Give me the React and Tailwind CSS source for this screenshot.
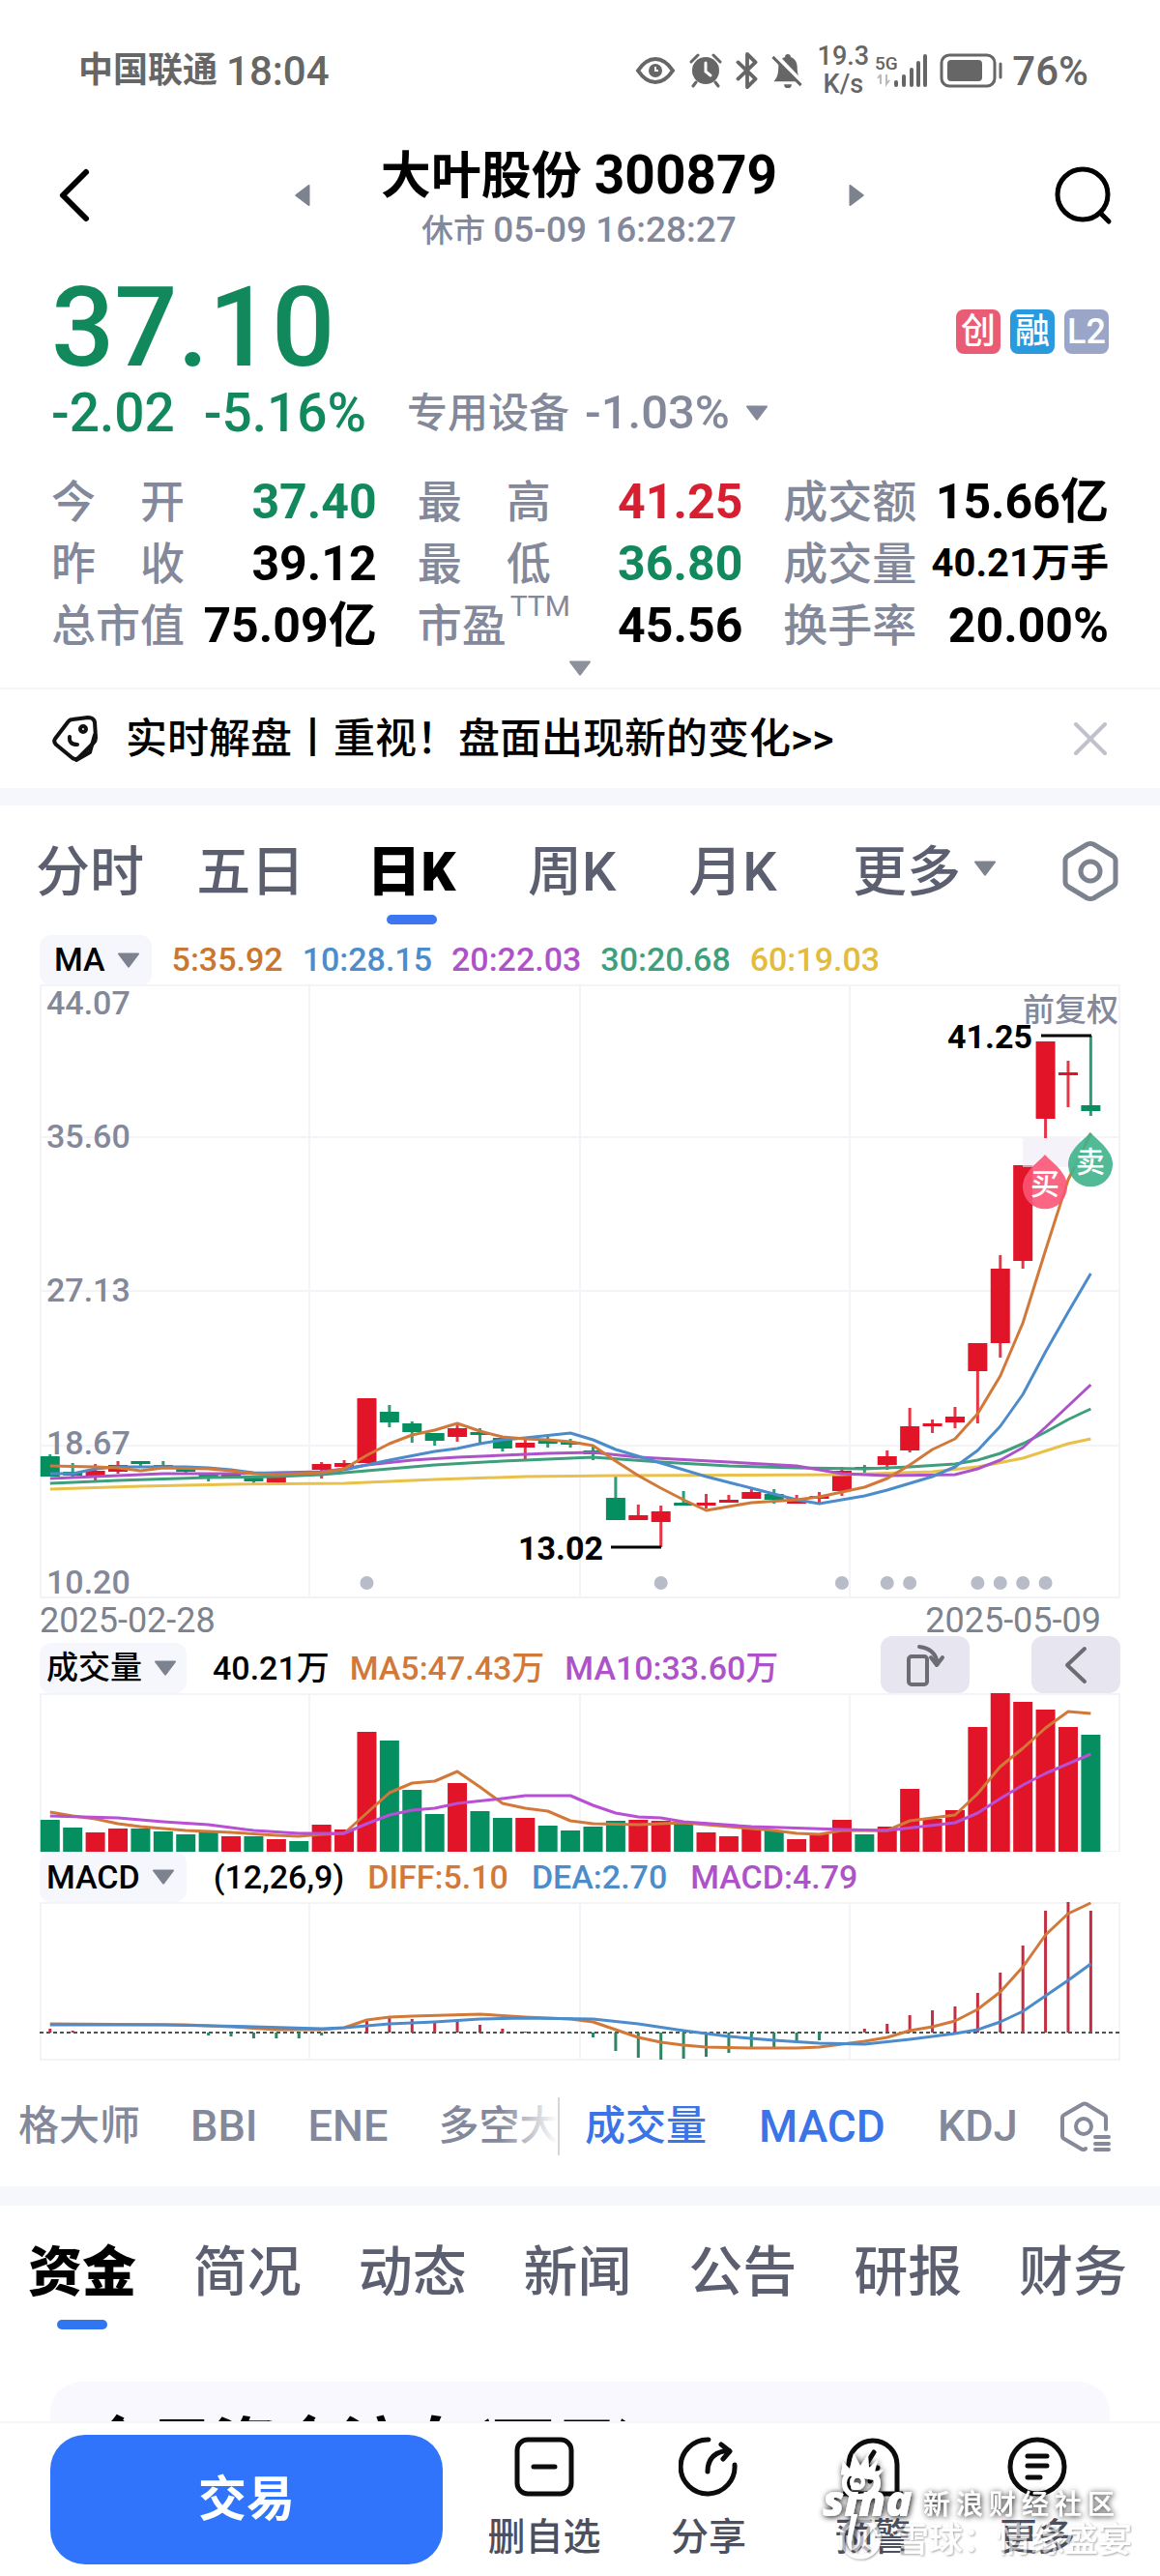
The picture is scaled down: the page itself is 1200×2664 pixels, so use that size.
import { useState } from 'react'

const RED = '#e11428'
const GREEN = '#058e5f'
const ORANGE = '#d2793a'
const BLUE = '#4c8ccb'
const PURPLE = '#ad52c9'
const TEAL = '#3f9f7c'
const YELLOW = '#e8c04a'

// [direction, body top, body bottom, high, low]
const CANDLES = [
  ['d', 1506, 1527, 1504, 1527], ['d', 1522, 1526, 1513, 1528], ['u', 1521, 1528, 1514, 1531],
  ['u', 1515, 1522, 1511, 1524], ['d', 1511, 1514, 1511, 1516], ['d', 1515, 1517, 1511, 1517],
  ['d', 1519, 1522, 1519, 1524], ['d', 1525, 1527, 1525, 1532], ['u', 1525, 1527, 1525, 1527],
  ['d', 1527, 1532, 1527, 1534], ['u', 1528, 1533, 1527, 1533], ['d', 1523, 1526, 1523, 1526],
  ['u', 1514, 1520, 1512, 1529], ['u', 1513, 1517, 1510, 1519], ['u', 1446, 1513, 1446, 1513],
  ['d', 1460, 1471, 1453, 1476], ['d', 1472, 1481, 1470, 1492], ['d', 1482, 1490, 1482, 1495],
  ['u', 1477, 1486, 1471, 1491], ['d', 1481, 1484, 1477, 1492], ['d', 1487, 1498, 1485, 1501],
  ['u', 1492, 1497, 1489, 1510], ['d', 1489, 1493, 1486, 1497], ['d', 1491, 1493, 1488, 1497],
  ['d', 1500, 1504, 1495, 1510], ['d', 1549, 1572, 1527, 1572], ['u', 1567, 1572, 1556, 1572],
  ['u', 1563, 1574, 1557, 1600], ['d', 1554, 1557, 1542, 1557], ['u', 1554, 1556, 1545, 1560],
  ['u', 1551, 1553, 1546, 1554], ['u', 1543, 1550, 1540, 1550], ['d', 1545, 1551, 1540, 1555],
  ['u', 1552, 1555, 1546, 1555], ['u', 1547, 1549, 1543, 1556], ['u', 1521, 1542, 1517, 1547],
  ['d', 1517, 1519, 1515, 1523], ['u', 1506, 1515, 1500, 1520], ['u', 1475, 1500, 1456, 1502],
  ['u', 1472, 1475, 1468, 1482], ['u', 1465, 1471, 1455, 1477], ['u', 1389, 1418, 1389, 1472],
  ['u', 1312, 1389, 1298, 1404], ['u', 1205, 1304, 1205, 1312], ['u', 1077, 1157, 1077, 1177],
  ['u', 1109, 1112, 1097, 1145], ['d', 1143, 1149, 1071, 1154],
]

const VOLUMES = [
  33, 25, 20, 24, 24, 21, 18, 21, 16, 16, 13, 11, 28, 23, 124, 115, 64, 39, 71, 42, 35, 35, 27, 22,
  26, 32, 33, 32, 29, 20, 16, 24, 22, 13, 18, 33, 18, 26, 65, 34, 43, 129, 164, 155, 147, 129, 121,
]

const MACD = [
  4, 2, 0, 0, 0, 0, 0, -3, -4, -6, -6, -6, -3, 0, 12, 15, 14, 11, 11, 8, 4, 1, 0, -1, -5, -19, -26,
  -28, -27, -25, -21, -16, -15, -11, -8, 0, 4, 9, 18, 23, 27, 41, 62, 90, 126, 135, 126,
]

const PRICE_LINES = [
  { color: YELLOW, points: [[0, 1540], [4, 1537], [8, 1535], [13, 1534], [17, 1530], [21, 1527], [25, 1526], [35, 1525], [39, 1522], [41, 1517], [43, 1508], [45, 1493], [46, 1488]] },
  { color: TEAL, points: [[0, 1534], [3, 1531], [7, 1528], [10, 1527], [12, 1525], [14, 1521], [17, 1515], [20, 1511], [23, 1508], [24, 1507], [27, 1512], [30, 1516], [33, 1518], [36, 1519], [38, 1517], [40, 1514], [41, 1510], [42, 1503], [43, 1493], [44, 1481], [45, 1468], [46, 1457]] },
  { color: PURPLE, points: [[0, 1529], [2, 1527], [5, 1524], [8, 1524], [10, 1523], [12, 1522], [13, 1519], [14, 1515], [16, 1510], [18, 1507], [20, 1505], [22, 1503], [24, 1502], [26, 1507], [30, 1512], [33, 1516], [35, 1524], [37, 1526], [40, 1525], [41, 1519], [42, 1510], [43, 1497], [44, 1476], [45, 1454], [46, 1432]] },
  { color: BLUE, points: [[0, 1524], [1, 1524], [2, 1519], [3, 1517], [6, 1517], [7, 1518], [8, 1520], [9, 1523], [10, 1524], [11, 1524], [12, 1523], [13, 1520], [14, 1515], [15, 1510], [17, 1501], [18, 1498], [19, 1493], [20, 1489], [21, 1487], [23, 1482], [24, 1489], [25, 1499], [27, 1513], [29, 1527], [31, 1539], [33, 1551], [34, 1555], [36, 1547], [37, 1541], [39, 1527], [40, 1517], [41, 1500], [42, 1475], [43, 1442], [44, 1398], [45, 1357], [46, 1317]] },
  { color: ORANGE, points: [[0, 1516], [2, 1517], [3, 1518], [4, 1521], [5, 1518], [7, 1519], [8, 1521], [9, 1524], [10, 1525], [11, 1524], [12, 1523], [13, 1519], [14, 1505], [15, 1493], [16, 1484], [17, 1479], [18, 1472], [19, 1480], [20, 1486], [21, 1488], [22, 1489], [23, 1491], [24, 1495], [25, 1511], [26, 1526], [27, 1539], [28, 1551], [29, 1562], [30, 1558], [31, 1554], [33, 1551], [34, 1548], [35, 1543], [36, 1538], [37, 1529], [38, 1515], [39, 1499], [40, 1488], [41, 1462], [42, 1423], [43, 1368], [44, 1293], [45, 1220], [46, 1172]] },
]

const VOLUME_LINES = [
  { color: ORANGE, points: [[0, 1874], [1, 1878], [2, 1881], [3, 1886], [4, 1889], [6, 1893], [8, 1895], [10, 1898], [11, 1899], [12, 1897], [13, 1896], [14, 1875], [15, 1854], [16, 1844], [17, 1842], [18, 1832], [19, 1848], [20, 1865], [21, 1870], [22, 1873], [23, 1883], [24, 1886], [26, 1887], [28, 1885], [30, 1889], [32, 1893], [33, 1896], [34, 1897], [35, 1893], [37, 1893], [38, 1883], [39, 1880], [40, 1877], [41, 1855], [42, 1827], [43, 1808], [44, 1787], [45, 1770], [46, 1772]] },
  { color: '#b84fd4', points: [[0, 1878], [3, 1880], [5, 1884], [7, 1887], [9, 1893], [11, 1896], [13, 1896], [14, 1886], [15, 1877], [16, 1872], [17, 1870], [18, 1865], [20, 1860], [21, 1857], [23, 1857], [24, 1867], [25, 1875], [26, 1879], [27, 1880], [28, 1884], [31, 1889], [35, 1892], [37, 1893], [40, 1885], [41, 1875], [42, 1860], [43, 1846], [44, 1834], [45, 1824], [46, 1814]] },
]

const MACD_LINES = [
  { color: ORANGE, points: [[0, 2093], [6, 2094], [8, 2096], [10, 2099], [12, 2099], [13, 2097], [14, 2089], [15, 2086], [16, 2085], [19, 2083], [21, 2086], [23, 2088], [24, 2091], [25, 2099], [26, 2107], [27, 2112], [28, 2115], [29, 2117], [31, 2118], [33, 2118], [34, 2117], [35, 2114], [36, 2111], [37, 2107], [38, 2100], [39, 2096], [40, 2090], [41, 2078], [42, 2060], [43, 2034], [44, 2001], [45, 1979], [46, 1968]] },
  { color: BLUE, points: [[0, 2094], [5, 2094], [9, 2096], [12, 2098], [13, 2097], [15, 2093], [17, 2091], [19, 2088], [21, 2087], [24, 2088], [26, 2093], [28, 2100], [30, 2106], [32, 2110], [34, 2113], [36, 2114], [38, 2109], [40, 2103], [41, 2099], [42, 2091], [43, 2080], [44, 2064], [45, 2048], [46, 2031]] },
]

const STATS = [
  ['今开', '37.40', 'text-[50px] text-[#12895d]'],
  ['最高', '41.25', 'text-[50px] text-[#d61f30]'],
  ['成交额', '15.66亿', 'text-[50px] text-black'],
  ['昨收', '39.12', 'text-[50px] text-black'],
  ['最低', '36.80', 'text-[50px] text-[#12895d]'],
  ['成交量', '40.21万手', 'text-[40px] text-black'],
  ['总市值', '75.09亿', 'text-[50px] text-black'],
  ['市盈', '45.56', 'text-[50px] text-black'],
  ['换手率', '20.00%', 'text-[50px] text-black'],
]

const PERIODS = ['分时', '五日', '日K', '周K', '月K']
const SECTIONS = ['资金', '简况', '动态', '新闻', '公告', '研报', '财务']

const x = (i) => 10.8 + i * 23.404
const toPoints = (points) => points.map(([i, y]) => `${x(i)},${y}`).join(' ')
const isUp = (i) => CANDLES[i][0] === 'u'

function Triangle({ className = '' }) {
  return (
    <svg viewBox="0 0 24 16" className={`h-4 w-6 shrink-0 ${className}`} aria-hidden="true">
      <path d="M2 0.500h20a1 1 0 0 1 0.800 1.600L13 15a1.200 1.200 0 0 1-2 0L1.200 2.100A1 1 0 0 1 2 0.500z" fill="currentColor" />
    </svg>
  )
}

function Grid({ top, bottom, rows = [] }) {
  return (
    <g stroke="#f4f4f8" strokeWidth="2">
      {[1, 279, 559, 838, 1117].map((gx) => <line key={gx} x1={gx} x2={gx} y1={top} y2={bottom} />)}
      {[top + 1, ...rows, bottom - 1].map((gy) => <line key={gy} x1="0" x2="1118" y1={gy} y2={gy} />)}
    </g>
  )
}

function Lines({ lines }) {
  return lines.map(({ color, points }) => (
    <polyline key={color} points={toPoints(points)} fill="none" stroke={color} strokeWidth="3" strokeLinejoin="round" />
  ))
}

function Pin({ cx, cy, fill, label }) {
  return (
    <g transform={`translate(${cx} ${cy})`}>
      <path d="M0-32C5-26 14-20 18-13a23 23 0 1 1-36 0C-14-20-5-26 0-32z" fill={fill} fillOpacity="0.9" />
      <text y="9" textAnchor="middle" fontSize="30" fontWeight="500" fill="#fff">{label}</text>
    </g>
  )
}

function StatusBar() {
  return (
    <header className="flex h-[146px] items-center justify-between pl-[81px] pr-[74px] text-[42px] font-medium text-[#666]">
      <div className="flex items-center gap-[9px]">
        <span className="text-[36px] font-bold">中国联通</span>
        <span>18:04</span>
      </div>
      <div className="flex items-center">
        <svg viewBox="0 0 42 30" className="h-[30px] w-[42px]" fill="none" stroke="currentColor" strokeWidth="4">
          <path d="M3 15C9 6 15 3 21 3s12 3 18 12c-6 9-12 12-18 12S9 24 3 15z" />
          <circle cx="21" cy="15" r="7" fill="currentColor" stroke="none" />
          <path d="M21 11v4h3" stroke="#fff" strokeWidth="2" />
        </svg>
        <svg viewBox="0 0 34 36" className="ml-[14px] h-[36px] w-[34px]" fill="none" stroke="currentColor" strokeWidth="3" strokeLinecap="round">
          <circle cx="17" cy="18" r="14" fill="currentColor" stroke="none" />
          <path d="M2 9l7-7M32 9l-7-7M7 30l-3 4M27 30l3 4" />
          <path d="M17 10v9l5 4" stroke="#fff" />
        </svg>
        <svg viewBox="0 0 26 40" className="ml-[13px] h-[38px] w-[26px]" fill="none" stroke="currentColor" strokeWidth="4" strokeLinejoin="round" strokeLinecap="round">
          <path d="M3 11l19 18-9 9V2l9 9L3 29" />
        </svg>
        <svg viewBox="0 0 34 38" className="ml-[12px] h-[37px] w-[34px]" fill="currentColor">
          <path d="M17 1a3 3 0 0 1 3 3c5 2 7 6 7 11 0 8 2 12 5 15H2c3-3 5-7 5-15 0-5 2-9 7-11a3 3 0 0 1 3-3zM13 33h8a4 4 0 0 1-8 0z" />
          <path d="M3 2l29 30" stroke="#fff" strokeWidth="6" />
          <path d="M1 4l30 30" stroke="currentColor" strokeWidth="3" />
        </svg>
        <div className="ml-[12px] flex w-[56px] flex-col items-center text-[27px] leading-[29px]">
          <span>19.3</span>
          <span>K/s</span>
        </div>
        <svg viewBox="0 0 56 34" className="ml-[5px] h-[34px] w-[56px]" fill="currentColor">
          <text x="0" y="16" fontSize="19" fontWeight="500">5G</text>
          <path d="M6 21v10M3 25l3-4M12 21v10l3-4" fill="none" stroke="#bbb" strokeWidth="2" />
          <rect x="20" y="27" width="4" height="7" rx="2" />
          <rect x="28" y="21" width="4" height="13" rx="2" />
          <rect x="36" y="14" width="4" height="20" rx="2" />
          <rect x="43" y="7" width="4" height="27" rx="2" />
          <rect x="50" y="0" width="4" height="34" rx="2" />
        </svg>
        <svg viewBox="0 0 66 36" className="ml-[11px] h-[36px] w-[66px]" fill="none" stroke="currentColor">
          <rect x="2" y="2" width="55" height="32" rx="8" strokeWidth="3" />
          <rect x="8" y="7" width="36" height="22" rx="4" fill="currentColor" stroke="none" />
          <path d="M63 11v14" strokeWidth="3" strokeLinecap="round" />
        </svg>
        <span className="ml-[9px]">76%</span>
      </div>
    </header>
  )
}

function TitleBar() {
  return (
    <div className="flex h-[112px] items-center justify-between pl-[58px] pr-[48px]">
      <button type="button" aria-label="返回" className="w-[50px]">
        <svg viewBox="0 0 40 60" className="h-[60px] w-[40px]" fill="none" stroke="#000" strokeWidth="6" strokeLinecap="round" strokeLinejoin="round">
          <path d="M31 6L7 30l24 24" />
        </svg>
      </button>
      <div className="flex items-center gap-[67px]">
        <button type="button" aria-label="上一只" className="text-[#7c828e]"><Triangle className="rotate-90" /></button>
        <div className="flex w-[415px] flex-col items-center pt-[4px]">
          <h1 className="whitespace-nowrap text-[52px] font-bold leading-[64px] text-black">
            大叶股份 <span className="text-[55px]">300879</span>
          </h1>
          <p className="mt-[3px] whitespace-nowrap text-[33px] font-medium leading-[40px] text-[#83889a]">
            休市 <span className="text-[37px]">05-09 16:28:27</span>
          </p>
        </div>
        <button type="button" aria-label="下一只" className="text-[#7c828e]"><Triangle className="-rotate-90" /></button>
      </div>
      <button type="button" aria-label="搜索">
        <svg viewBox="0 0 62 62" className="h-[62px] w-[62px]" fill="none" stroke="#000" strokeWidth="5" strokeLinecap="round">
          <circle cx="30" cy="30" r="26" />
          <path d="M48 49l9 9" />
        </svg>
      </button>
    </div>
  )
}

function Quote() {
  return (
    <section className="px-[53px] pt-[21px]">
      <div className="flex items-center justify-between">
        <strong className="text-[115px] font-medium leading-[120px] text-[#12895d]">37.10</strong>
        <div className="mt-[8px] flex gap-[10px] text-[36px] font-medium leading-[46px] text-white">
          <span className="h-[46px] w-[46px] rounded-lg bg-[#ea5c73] text-center">创</span>
          <span className="h-[46px] w-[46px] rounded-lg bg-[#2a9ade] text-center">融</span>
          <span className="h-[46px] w-[46px] rounded-lg bg-[#9aa5c8] text-center">L2</span>
        </div>
      </div>
      <div className="flex h-[56px] items-center">
        <span className="text-[55px] font-medium text-[#12895d]">-2.02</span>
        <span className="ml-[30px] text-[55px] font-medium text-[#12895d]">-5.16%</span>
        <button type="button" className="ml-[42px] flex items-center gap-[16px] font-medium text-[#83889a]">
          <span className="text-[42px]">专用设备</span>
          <span className="text-[49px]">-1.03%</span>
          <Triangle />
        </button>
      </div>
      <dl className="mt-[32px] grid grid-cols-3 gap-x-[42px]">
        {STATS.map(([label, value, tone]) => (
          <div key={label} className="flex h-[64px] items-center justify-between">
            <dt className="flex w-[138px] shrink-0 justify-between text-[46px] font-medium leading-[64px] text-[#83889a]">
              {label === '市盈' ? (
                <span className="flex whitespace-nowrap">市盈<sup className="top-0 -mt-[14px] ml-1 text-[30px] font-normal leading-[52px]">TTM</sup></span>
              ) : label.split('').map((char) => <span key={char}>{char}</span>)}
            </dt>
            <dd className={`whitespace-nowrap font-bold ${tone}`}>{value}</dd>
          </div>
        ))}
      </dl>
      <div className="flex h-[32px] items-start justify-center pt-[4px] text-[#8b909b]"><Triangle /></div>
    </section>
  )
}

function Notice() {
  return (
    <div className="flex h-[104px] items-center border-t-2 border-[#f4f4f6] pl-[54px] pr-[54px]">
      <svg viewBox="0 0 48 50" className="h-[50px] w-[48px] shrink-0" fill="none" stroke="#111" strokeWidth="4" strokeLinejoin="round" strokeLinecap="round">
        <path d="M21 5l16-2q6 0 7 5l1 16q0 3-2 5L27 45q-3 2-6 0L4 31q-3-3-1-6L16 8q2-3 5-3z" />
        <path d="M44 21l-5 18-14 8" />
        <circle cx="32" cy="15" r="3" />
        <path d="M18 23q-1 8 8 8" />
      </svg>
      <a href="#notice" className="ml-[28px] whitespace-nowrap text-[43px] font-medium leading-[60px] text-black">实时解盘丨重视！盘面出现新的变化&gt;&gt;</a>
      <button type="button" aria-label="关闭" className="ml-auto">
        <svg viewBox="0 0 36 36" className="h-[36px] w-[36px]" stroke="#bfc2cb" strokeWidth="4" strokeLinecap="round">
          <path d="M3 3l30 30M33 3L3 33" />
        </svg>
      </button>
    </div>
  )
}

function PeriodTabs() {
  const [period, setPeriod] = useState('日K')

  return (
    <nav className="flex h-[134px] items-start pl-[10px] pt-[37px] text-[56px] leading-[64px] text-[#5c5f70]">
      {PERIODS.map((item) => (
        <button
          key={item}
          type="button"
          onClick={() => setPeriod(item)}
          className={`flex flex-1 flex-col items-center whitespace-nowrap ${item === period ? 'font-black text-black' : 'font-medium'}`}
        >
          {item}
          {item === period && <span className="mt-[12px] h-[10px] w-[52px] rounded-full bg-[#3c76f0]" />}
        </button>
      ))}
      <button type="button" className="ml-[41px] flex w-[174px] shrink-0 items-center gap-[13px] font-medium">
        更多
        <Triangle className="-mt-[8px] text-[#7c828e]" />
      </button>
      <button type="button" aria-label="设置" className="mx-[42px] shrink-0">
        <svg viewBox="0 0 60 62" className="h-[62px] w-[60px]" fill="none" stroke="#7c828e" strokeWidth="5" strokeLinejoin="round">
          <path d="M27 3q3-1 6 0l20 12q3 2 3 5v22q0 3-3 5L33 59q-3 1-6 0L7 47q-3-2-3-5V20q0-3 3-5z" />
          <circle cx="30" cy="31" r="10" />
        </svg>
      </button>
    </nav>
  )
}

function Chip({ children, className = '' }) {
  return (
    <button type="button" className={`flex h-[52px] items-center gap-[12px] whitespace-nowrap rounded-xl bg-[#f6f6fd] text-black ${className}`}>
      {children}
      <Triangle className="text-[#7c828e]" />
    </button>
  )
}

function PriceChart() {
  return (
    <svg viewBox="0 1018 1118 636" className="block h-auto w-full" role="img" aria-label="日K线图">
      <Grid top={1018} bottom={1653} rows={[1176, 1335, 1495]} />
      <g fontSize="34" fill="#83889a">
        <text x="7" y="1049">44.07</text>
        <text x="7" y="1187">35.60</text>
        <text x="7" y="1346">27.13</text>
        <text x="7" y="1504">18.67</text>
        <text x="7" y="1648">10.20</text>
        <text x="1116" y="1056" fontSize="33" textAnchor="end">前复权</text>
      </g>
      {CANDLES.map(([, top, bottom, high, low], i) => (
        <g key={i} fill={isUp(i) ? RED : GREEN}>
          <rect x={x(i) - 1.5} y={high} width="3" height={low - high} fillOpacity="0.85" />
          <rect x={x(i) - 10} y={top} width="20" height={Math.max(bottom - top, 3)} />
        </g>
      ))}
      <Lines lines={PRICE_LINES} />
      <g fill="#b8bbc8">
        {[14, 27, 35, 37, 38, 41, 42, 43, 44].map((i) => <circle key={i} cx={x(i)} cy="1637" r="7" />)}
      </g>
      <path d="M591 1600h52M1036 1071h52" stroke="#000" strokeWidth="3" />
      <g fontSize="34" fontWeight="700" textAnchor="end">
        <text x="583" y="1613">13.02</text>
        <text x="1027" y="1084">41.25</text>
      </g>
      <rect x="1017" y="1177" width="60" height="30" fill="#eeeaf6" fillOpacity="0.6" />
      <Pin cx={1040} cy={1226} fill="#fb5575" label="买" />
      <Pin cx={1087} cy={1203} fill="#3fb28b" label="卖" />
    </svg>
  )
}

function VolumeChart() {
  return (
    <svg viewBox="0 1751 1118 164" className="block h-auto w-full" role="img" aria-label="成交量图">
      <Grid top={1751} bottom={1916} />
      {VOLUMES.map((v, i) => (
        <rect key={i} x={x(i) - 10} y={1915 - v} width="20" height={v} fill={isUp(i) ? RED : GREEN} />
      ))}
      <Lines lines={VOLUME_LINES} />
    </svg>
  )
}

function MacdChart() {
  return (
    <svg viewBox="0 1967 1118 164" className="block h-auto w-full" role="img" aria-label="MACD图">
      <Grid top={1967} bottom={2131} />
      <path d="M0 2102h1118" stroke="#4c5350" strokeWidth="2" strokeDasharray="4 3" />
      {MACD.map((v, i) => (
        <rect key={i} x={x(i) - 1.5} y={v > 0 ? 2102 - v : 2102} width="3" height={Math.abs(v)} fill={v > 0 ? '#c22f42' : '#2c8563'} />
      ))}
      <Lines lines={MACD_LINES} />
    </svg>
  )
}

function Charts() {
  return (
    <section className="px-[41px] text-[34px] font-medium">
      <div className="flex h-[51px] items-center">
        <Chip className="mr-[21px] pl-[15px] pr-[12px]">MA</Chip>
        <div className="flex gap-[20px]">
          <span className="text-[#c9772f]">5:35.92</span>
          <span className="text-[#4c8ccb]">10:28.15</span>
          <span className="text-[#ad52c9]">20:22.03</span>
          <span className="text-[#3f9f7c]">30:20.68</span>
          <span className="text-[#e3bb3d]">60:19.03</span>
        </div>
      </div>
      <PriceChart />
      <div className="flex h-[38px] items-center justify-between pr-[20px] pt-[6px] text-[36px] font-normal text-[#7c828e]">
        <time>2025-02-28</time>
        <time>2025-05-09</time>
      </div>
      <div className="flex h-[59px] items-end">
        <Chip className="pl-[7px] pr-[10px] text-[33px]">成交量</Chip>
        <div className="ml-[27px] flex h-[52px] items-center gap-[21px] whitespace-nowrap">
          <span className="text-black">40.21万</span>
          <span className="text-[#d2793a]">MA5:47.43万</span>
          <span className="text-[#ad52c9]">MA10:33.60万</span>
        </div>
        <div className="ml-auto flex gap-[64px]">
          <button type="button" aria-label="横屏" className="flex h-[59px] w-[92px] items-center justify-center rounded-xl bg-[#e7e5f0]">
            <svg viewBox="0 0 42 46" className="h-[46px] w-[42px]" fill="none" stroke="#6b6c74" strokeWidth="4" strokeLinecap="round" strokeLinejoin="round">
              <rect x="4" y="14" width="19" height="29" rx="3" />
              <path d="M15 4q17 2 19 18M27 15l6 8 6-8" />
            </svg>
          </button>
          <button type="button" aria-label="收起" className="flex h-[59px] w-[92px] items-center justify-center rounded-xl bg-[#e7e5f0]">
            <svg viewBox="0 0 24 40" className="h-[40px] w-[24px]" fill="none" stroke="#6b6c74" strokeWidth="4" strokeLinecap="round" strokeLinejoin="round">
              <path d="M21 3L3 20l18 17" />
            </svg>
          </button>
        </div>
      </div>
      <VolumeChart />
      <div className="flex h-[52px] items-center">
        <Chip className="pl-[7px] pr-[12px]">MACD</Chip>
        <div className="ml-[28px] flex gap-[24px] whitespace-nowrap">
          <span className="text-black">(12,26,9)</span>
          <span className="text-[#d2793a]">DIFF:5.10</span>
          <span className="text-[#4c8ccb]">DEA:2.70</span>
          <span className="text-[#ad52c9]">MACD:4.79</span>
        </div>
      </div>
      <MacdChart />
    </section>
  )
}

function IndicatorBar() {
  return (
    <div className="flex h-[130px] items-center pr-[50px] pt-[6px] text-[42px] font-medium leading-[60px] text-[#83889a]">
      <div className="relative flex w-[579px] gap-[52px] overflow-hidden whitespace-nowrap border-r-2 border-[#d4d6dc] pl-[19px]">
        <button type="button">格大师</button>
        <button type="button" className="text-[45px]">BBI</button>
        <button type="button" className="text-[45px]">ENE</button>
        <button type="button">多空大师</button>
        <span className="absolute inset-y-0 right-0 w-[60px] bg-linear-to-r from-white/0 to-white" />
      </div>
      <div className="flex flex-1 gap-[54px] whitespace-nowrap pl-[26px]">
        <button type="button" className="text-[#3a74e6]">成交量</button>
        <button type="button" className="text-[46px] text-[#3a74e6]">MACD</button>
        <button type="button" className="text-[45px]">KDJ</button>
      </div>
      <button type="button" aria-label="指标设置" className="shrink-0">
        <svg viewBox="0 0 54 54" className="h-[54px] w-[54px]" fill="none" stroke="#85899a" strokeWidth="4" strokeLinecap="round" strokeLinejoin="round">
          <path d="M48 30V18q0-2-2-3L28 4q-2-1-4 0L5 15q-2 1-2 3v19q0 2 2 3l17 10q3 2 5 0" />
          <circle cx="25" cy="27" r="8" />
          <path d="M37 38h14M37 45h14M37 51h14" />
        </svg>
      </button>
    </div>
  )
}

function SectionTabs() {
  const [section, setSection] = useState('资金')

  return (
    <nav className="flex h-[182px] items-start justify-between pl-[29px] pr-[34px] pt-[37px] text-[56px] leading-[64px]">
      {SECTIONS.map((item) => (
        <button
          key={item}
          type="button"
          onClick={() => setSection(item)}
          className={`flex flex-col items-center whitespace-nowrap ${item === section ? 'font-black text-black' : 'font-medium text-[#5c5f70]'}`}
        >
          {item}
          {item === section && <span className="mt-[17px] h-[10px] w-[52px] rounded-full bg-[#3076f0]" />}
        </button>
      ))}
    </nav>
  )
}

function Watermark() {
  return (
    <svg viewBox="0 0 330 130" className="pointer-events-none absolute bottom-[6px] right-[24px] h-[130px] w-[330px]" aria-hidden="true">
      <defs>
        <filter id="shade" x="-20%" y="-20%" width="140%" height="140%">
          <feDropShadow dx="1" dy="1" stdDeviation="3" floodColor="#000" floodOpacity="1" />
        </filter>
        <filter id="soft" x="-20%" y="-20%" width="140%" height="140%">
          <feDropShadow dx="1" dy="1" stdDeviation="1" floodColor="#555" floodOpacity="0.9" />
        </filter>
      </defs>
      <g fill="#fff" filter="url(#soft)" opacity="0.6">
        <text x="80" y="111" fontSize="35" fontWeight="500">雪球：情缘盛宴</text>
        <g fill="none" stroke="#fff" strokeWidth="5">
          <circle cx="44" cy="97" r="19" />
          <path d="M34 84l18 26M56 84l-18 26" />
        </g>
      </g>
      <g filter="url(#shade)" fill="#fff">
        <path d="M24 31l2-13 7 7 4-16 7 13 8-12 1 14 9-8-3 12 9-2-9 11z" />
        <path fillRule="evenodd" d="M45 22c11 0 20 8 20 18s-9 17-20 17-20-7-20-17 9-18 20-18zm-2 7c-8 0-13 5-13 11s5 11 13 11 15-6 15-12-7-10-15-10z" />
        <path fillRule="evenodd" d="M41 31a8 8 0 1 1 0 16 8 8 0 0 1 0-16zm2 4a4 4 0 1 0 0 7 4 4 0 0 0 0-7z" />
        <text x="5" y="74" fontSize="45" fontWeight="800" fontStyle="italic" fontFamily="Open Sans">sina</text>
        <path d="M35 72l-4 22q-2 11 4 15-1-7 1-15l5-22z" />
      </g>
      <g filter="url(#shade)" fill="#fff" fontSize="28" fontWeight="500">
        {['新', '浪', '财', '经', '社', '区'].map((char, i) => <text key={char} x={109 + i * 34} y="72">{char}</text>)}
      </g>
    </svg>
  )
}

function Action({ label, children }) {
  return (
    <button type="button" className="flex flex-1 flex-col items-center text-[39px] font-medium leading-[48px] text-[#4c4f5e]">
      <svg viewBox="0 0 62 62" className="h-[62px] w-[62px]" fill="none" stroke="#0c0c0e" strokeWidth="5" strokeLinecap="round" strokeLinejoin="round">
        {children}
      </svg>
      <span className="mt-[18px] whitespace-nowrap">{label}</span>
    </button>
  )
}

function BottomBar() {
  return (
    <footer className="relative flex h-[160px] items-start border-t-2 border-[#f6f6f9] bg-white pl-[52px] pr-[42px] pt-[12px]">
      <button type="button" className="h-[134px] w-[406px] shrink-0 rounded-[36px] bg-[#2f74fa] text-[50px] font-bold text-white">交易</button>
      <div className="ml-[20px] flex flex-1 pt-[2px]">
        <Action label="删自选">
          <rect x="3" y="3" width="56" height="56" rx="11" />
          <path d="M20 31h22" />
        </Action>
        <Action label="分享">
          <path d="M31 3A28 28 0 1 0 58 29" />
          <path d="M30 36q0-20 22-22M44 8l9 7-7 8" />
        </Action>
        <Action label="预警">
          <path d="M6 58V29a25 25 0 0 1 50 0v29M1 59h60" />
          <path d="M32 16L22 32h14l-8 14" />
        </Action>
        <Action label="更多">
          <circle cx="31" cy="31" r="28" />
          <path d="M21 20h20M21 30h20M21 42h13" />
        </Action>
      </div>
      <Watermark />
    </footer>
  )
}

export default function App() {
  return (
    <div className="w-full overflow-hidden bg-white font-['Roboto','Noto_Sans_CJK_SC',sans-serif]">
      <StatusBar />
      <TitleBar />
      <Quote />
      <Notice />
      <div className="h-[18px] bg-[#f6f6fd]" />
      <PeriodTabs />
      <Charts />
      <IndicatorBar />
      <div className="h-[20px] bg-[#f6f6fd]" />
      <SectionTabs />
      <div className="mx-[52px] h-[41px] overflow-hidden rounded-t-[32px] bg-[#f8f8fe] pl-[37px] pt-[25px]">
        <h2 className="whitespace-nowrap text-[66px] font-bold leading-[88px] text-black">今日资金流向(万元)</h2>
      </div>
      <BottomBar />
    </div>
  )
}
